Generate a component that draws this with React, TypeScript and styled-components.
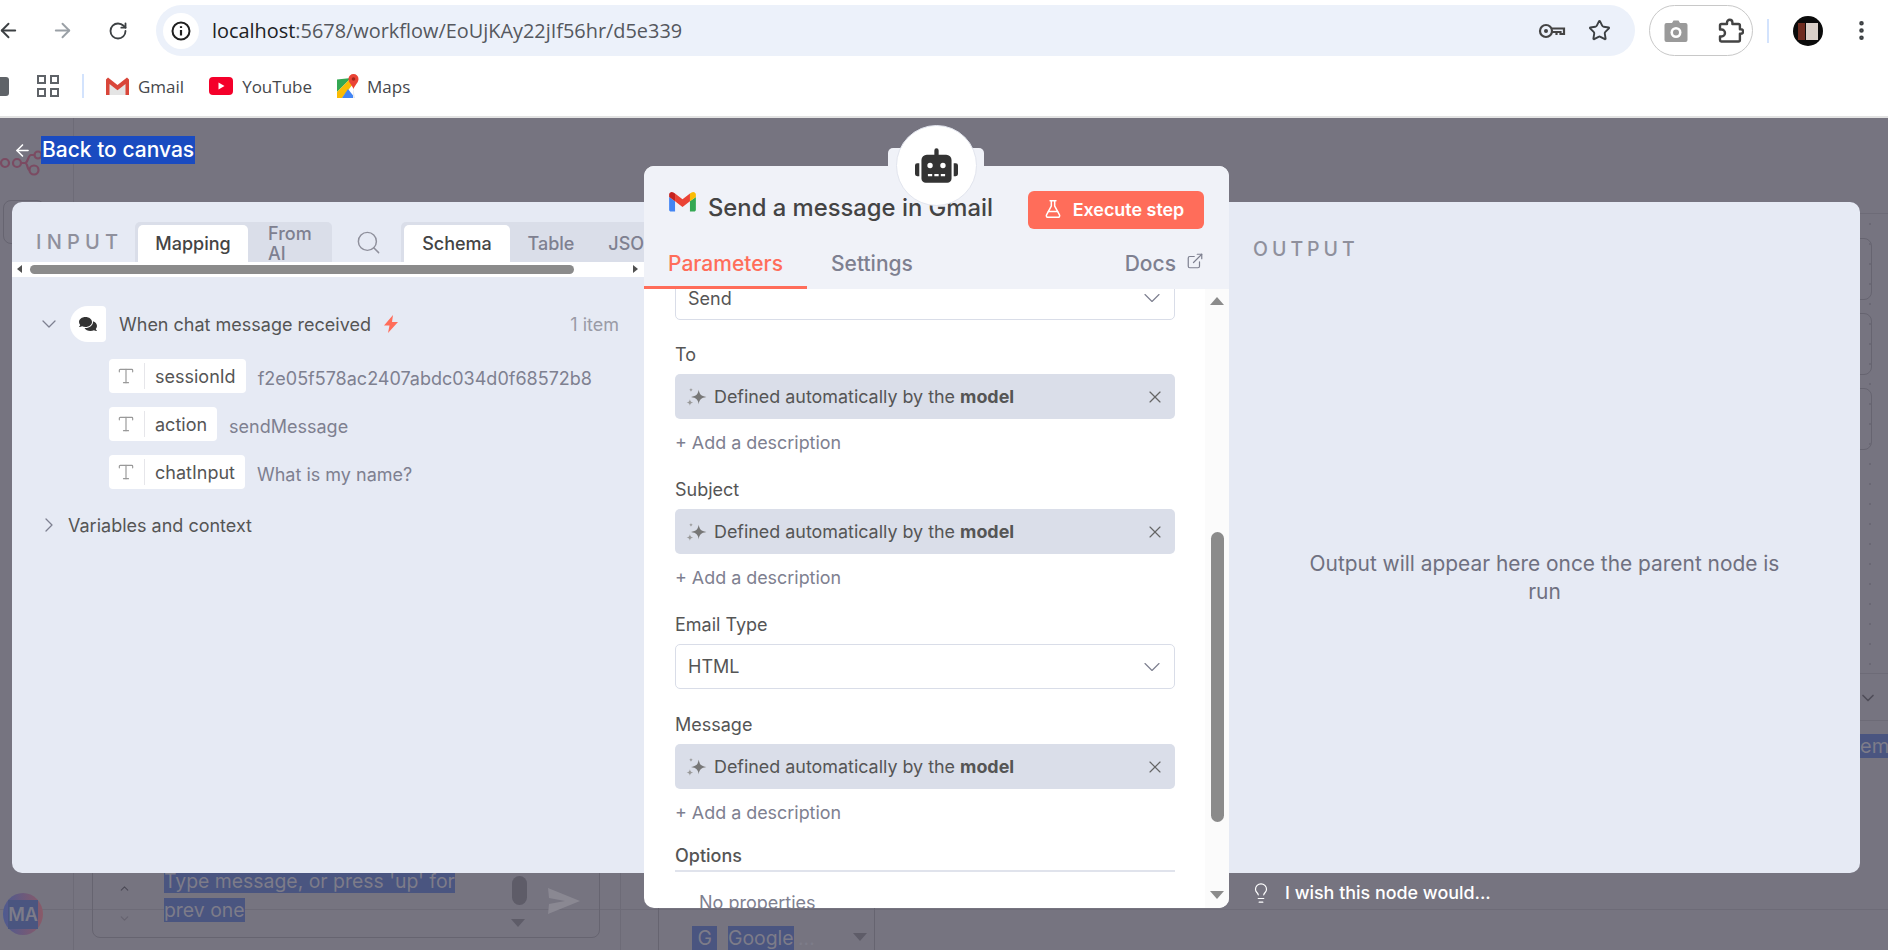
import React from 'react';
import styled, { createGlobalStyle } from 'styled-components';
import { ArrowLeft, ArrowRight, RotateCw, Star, Search, ChevronDown, ChevronRight, ChevronUp, ExternalLink, FlaskConical, X, Lightbulb, Type, EllipsisVertical } from 'lucide-react';
import { FaRobot, FaComments } from 'react-icons/fa';

const GlobalStyle = createGlobalStyle`
  html, body {
    margin: 0;
    padding: 0;
    background: #fff;
    overflow: hidden;
  }
  * { box-sizing: border-box; }
`;

const Frame = styled.div`
  width: 1888px;
  height: 950px;
  display: flex;
  flex-direction: column;
  overflow: hidden;
  font-family: Inter, "Noto Sans", sans-serif;
`;

/* browser chrome */
const BrowserBar = styled.div`
  height: 58px;
  padding: 5px 0 0 0;
  display: flex;
  align-items: flex-start;
  background: #fff;
  flex-shrink: 0;
`;

const NavButton = styled.div<{ $w: number; $color?: string }>`
  width: ${(p) => p.$w}px;
  height: 51px;
  display: flex;
  align-items: center;
  justify-content: flex-end;
  color: ${(p) => p.$color || '#3c4043'};
`;

const UrlBar = styled.div`
  width: 1479px;
  height: 51px;
  margin-left: 28px;
  border-radius: 26px;
  background: #ecf1fa;
  display: flex;
  align-items: center;
  padding: 0 24px 0 7px;
`;

const InfoBadge = styled.div`
  width: 36px;
  height: 36px;
  border-radius: 50%;
  background: #fff;
  display: flex;
  align-items: center;
  justify-content: center;
  flex-shrink: 0;
`;

const UrlText = styled.div`
  margin-left: 13px;
  font-family: "Open Sans", sans-serif;
  font-size: 19.9px;
  color: #55585e;
  flex: 1;
  white-space: nowrap;
  b {
    font-weight: 400;
    color: #202124;
  }
`;

const UrlIcons = styled.div`
  display: flex;
  align-items: center;
  gap: 22px;
  color: #3c4043;
`;

const ExtensionPill = styled.div`
  width: 104px;
  height: 51px;
  margin-left: 14px;
  border: 1.5px solid #c8c8c8;
  border-radius: 26px;
  display: flex;
  align-items: center;
  justify-content: space-between;
  padding: 0 8px 0 14px;
`;

const ToolbarDivider = styled.div`
  width: 2px;
  height: 24px;
  margin: 14px 0 0 14px;
  background: #d3e3fd;
`;

const Avatar = styled.div`
  width: 30px;
  height: 30px;
  margin: 11px 0 0 24px;
  border-radius: 50%;
  background: #0b0b0b;
  display: flex;
  align-items: center;
  justify-content: center;
  gap: 1px;
  &::before {
    content: '';
    width: 7px;
    height: 17px;
    background: #6e2c20;
  }
  &::after {
    content: '';
    width: 12px;
    height: 17px;
    background: #d9cfc8;
  }
`;

const MenuDots = styled.div`
  margin: 13px 0 0 26px;
  color: #3c4043;
`;

const BookmarksBar = styled.div`
  height: 60px;
  padding-bottom: 2px;
  border-bottom: 2px solid #e2e2e2;
  background: #fff;
  display: flex;
  align-items: center;
  flex-shrink: 0;
`;

const BookmarkStub = styled.div`
  width: 9px;
  height: 19px;
  border-radius: 0 3px 3px 0;
  background: #5f6368;
`;

const AppsGrid = styled.div`
  width: 22px;
  height: 22px;
  margin-left: 28px;
  display: grid;
  grid-template-columns: 9px 9px;
  gap: 4px;
  span {
    border: 2px solid #5f6368;
  }
`;

const BookmarkSep = styled.div`
  width: 2px;
  height: 24px;
  margin: 0 22px 0 23px;
  background: #d3e3fd;
`;

const Bookmark = styled.div<{ $gap: number; $after: number }>`
  display: flex;
  align-items: center;
  gap: ${(p) => p.$gap}px;
  margin-right: ${(p) => p.$after}px;
  font-family: "Open Sans", sans-serif;
  font-size: 17px;
  color: #45474b;
`;

/* n8n stage */
const Stage = styled.div`
  position: relative;
  flex: 1;
  background: #767480;
  display: flex;
  flex-direction: column;
  overflow: hidden;
`;

const CanvasLine = styled.div<{ $x?: number; $y?: number; $w?: number; $h?: number }>`
  position: absolute;
  left: ${(p) => p.$x ?? 0}px;
  top: ${(p) => p.$y ?? 0}px;
  width: ${(p) => p.$w ?? 1}px;
  height: ${(p) => p.$h ?? 1}px;
  background: #6d6b77;
`;

const CanvasBox = styled.div<{ $x: number; $y: number; $w: number; $h: number }>`
  position: absolute;
  left: ${(p) => p.$x}px;
  top: ${(p) => p.$y}px;
  width: ${(p) => p.$w}px;
  height: ${(p) => p.$h}px;
  border: 1px solid #666470;
  border-radius: 8px;
`;

const GridDots = styled.div`
  position: absolute;
  left: 1860px;
  top: 96px;
  width: 28px;
  height: 460px;
  background-image: radial-gradient(#6a6874 1px, transparent 1px);
  background-size: 20px 20px;
`;

const CanvasPiece = styled.div<{ $x: number; $y: number }>`
  position: absolute;
  left: ${(p) => p.$x}px;
  top: ${(p) => p.$y}px;
`;

const SelectedDim = styled.span<{ $plain?: boolean; $size?: number }>`
  background: ${(p) => (p.$plain ? 'none' : '#4a5580')};
  color: #7d7c89;
  font-size: ${(p) => p.$size ?? 19.4}px;
  line-height: 29px;
  -webkit-box-decoration-break: clone;
  box-decoration-break: clone;
`;

const UserBadge = styled.div`
  width: 40px;
  height: 42px;
  border-radius: 50%;
  background: linear-gradient(90deg, #4d5a90, #8a5a68);
  display: flex;
  align-items: center;
  justify-content: center;
  font-weight: 600;
`;

const ChatInputText = styled.div`
  width: 310px;
`;

const ScrollPill = styled.div`
  width: 15px;
  height: 29px;
  border-radius: 8px;
  background: #5e5c68;
`;

const DownTriangle = styled.div<{ $color?: string }>`
  width: 0;
  height: 0;
  border-left: 7px solid transparent;
  border-right: 7px solid transparent;
  border-top: 8px solid ${(p) => p.$color || '#5e5c68'};
`;

const UpTriangle = styled.div`
  width: 0;
  height: 0;
  border-left: 7px solid transparent;
  border-right: 7px solid transparent;
  border-bottom: 8px solid #8b8b8b;
`;

const BackRow = styled.div`
  position: relative;
  height: 84px;
  padding: 18px 0 0 13px;
  display: flex;
  align-items: flex-start;
  gap: 9px;
  color: #fff;
`;

const BackArrow = styled.div`
  height: 28px;
  display: flex;
  align-items: center;
`;

const BackLabel = styled.span`
  height: 28px;
  padding: 0 1px;
  background: #1a4bc0;
  color: #fff;
  font-size: 21px;
  font-weight: 500;
  line-height: 28px;
  white-space: nowrap;
`;

const Panel = styled.div`
  position: relative;
  width: 1848px;
  height: 671px;
  margin-left: 12px;
  flex-shrink: 0;
  display: grid;
  grid-template-columns: 633px 584px 631px;
  background: #e6eaf4;
  border-radius: 10px;
`;

const InputPane = styled.div`
  min-width: 0;
  overflow: hidden;
  border-radius: 10px 0 0 10px;
  color: #555;
`;

const PaneHeader = styled.div`
  height: 60px;
  padding: 20px 0 0 24px;
  display: flex;
  align-items: flex-start;
`;

const PaneTitle = styled.div`
  width: 99px;
  height: 40px;
  flex-shrink: 0;
  display: flex;
  align-items: center;
  font-size: 20px;
  font-weight: 500;
  letter-spacing: 5.2px;
  color: #8f909c;
`;

const Segmented = styled.div<{ $ml: number }>`
  height: 40px;
  margin-left: ${(p) => p.$ml}px;
  padding: 3px 3px 0;
  display: flex;
  background: #dadee9;
  border-radius: 5px 5px 0 0;
  flex-shrink: 0;
`;

const Segment = styled.div<{ $active?: boolean; $w: number; $wrap?: boolean }>`
  width: ${(p) => p.$w}px;
  height: 37px;
  display: flex;
  align-items: center;
  justify-content: ${(p) => (p.$wrap ? 'flex-start' : 'center')};
  padding: 0 ${(p) => (p.$wrap ? 22 : 0)}px 0 ${(p) => (p.$wrap ? 20 : 0)}px;
  border-radius: 5px 5px 0 0;
  background: ${(p) => (p.$active ? '#fff' : 'transparent')};
  color: ${(p) => (p.$active ? '#444' : '#7e8090')};
  font-size: 18px;
  font-weight: 500;
  line-height: 20px;
  white-space: ${(p) => (p.$wrap ? 'normal' : 'nowrap')};
`;

const SearchSlot = styled.div`
  width: 21px;
  height: 40px;
  margin-left: 26px;
  display: flex;
  align-items: center;
  justify-content: center;
  color: #8f909c;
  flex-shrink: 0;
`;

const HScroll = styled.div`
  height: 15px;
  padding: 3px 0 0 18px;
  background: #fff;
  position: relative;
  display: flex;
  align-items: flex-start;
`;

const HThumb = styled.div`
  width: 544px;
  height: 9px;
  border-radius: 5px;
  background: #8b8b8b;
`;

const HArrow = styled.div<{ $right?: boolean }>`
  position: absolute;
  top: 3px;
  ${(p) => (p.$right ? 'right: 7px;' : 'left: 5px;')}
  width: 0;
  height: 0;
  border-top: 4.5px solid transparent;
  border-bottom: 4.5px solid transparent;
  ${(p) => (p.$right ? 'border-left: 5px solid #505050;' : 'border-right: 5px solid #505050;')}
`;

const Schema = styled.div`
  padding: 29px 0 0 29px;
`;

const NodeRow = styled.div`
  height: 36px;
  display: flex;
  align-items: center;
`;

const TreeChevron = styled.div`
  width: 16px;
  height: 16px;
  flex-shrink: 0;
  display: flex;
  align-items: center;
  justify-content: center;
  color: #7e8090;
  svg {
    flex-shrink: 0;
  }
`;

const NodeIcon = styled.div`
  width: 36px;
  height: 36px;
  margin-left: 13px;
  background: #fff;
  border-radius: 50% 4px 4px 50%;
  display: flex;
  align-items: center;
  justify-content: center;
  color: #333;
`;

const NodeName = styled.div`
  margin-left: 13px;
  font-size: 18px;
  color: #555;
  white-space: nowrap;
`;

const BoltSlot = styled.div`
  margin-left: 13px;
  display: flex;
`;

const ItemCount = styled.div`
  margin-left: auto;
  margin-right: 26px;
  font-size: 18px;
  color: #9a9ba6;
`;

const FieldList = styled.div`
  padding: 17px 0 0 68px;
  display: flex;
  flex-direction: column;
  gap: 14px;
`;

const FieldRow = styled.div`
  display: flex;
  align-items: center;
  gap: 12px;
`;

const FieldPill = styled.div`
  height: 34px;
  display: flex;
  align-items: center;
  background: #fff;
  border-radius: 4px;
  padding: 0 10px 0 10px;
  font-size: 18px;
  color: #555;
`;

const FieldType = styled.div`
  height: 26px;
  width: 26px;
  margin-right: 10px;
  display: flex;
  align-items: center;
  border-right: 1px solid #e6e6ea;
  color: #999;
  svg {
    margin-left: -3px;
  }
`;

const FieldValue = styled.div`
  padding-top: 4px;
  font-size: 18px;
  color: #7e8090;
  white-space: nowrap;
`;

const ContextRow = styled.div`
  height: 24px;
  margin-top: 24px;
  display: flex;
  align-items: center;
  gap: 11px;
  font-size: 18px;
  color: #555;
`;

const CardSlot = styled.div`
  position: relative;
  min-width: 0;
`;

const Card = styled.div`
  position: absolute;
  left: -1px;
  top: -36px;
  width: 585px;
  height: 742px;
  display: flex;
  flex-direction: column;
  background: #fff;
  border-radius: 10px;
  overflow: hidden;
`;

const RobotTab = styled.div`
  position: absolute;
  left: 243px;
  top: -54px;
  width: 96px;
  height: 30px;
  background: #f0f2f8;
  border-radius: 5px 5px 0 0;
`;

const RobotBubble = styled.div`
  position: absolute;
  left: 251px;
  top: -77px;
  width: 81px;
  height: 81px;
  border-radius: 50%;
  background: #fff;
  border: 1px solid #e2e5ee;
  display: flex;
  align-items: center;
  justify-content: center;
  color: #333;
  z-index: 2;
`;

const CardHead = styled.div`
  height: 123px;
  background: #f0f2f8;
  flex-shrink: 0;
  display: flex;
  flex-direction: column;
`;

const TitleRow = styled.div`
  height: 80px;
  padding: 25px 25px 0 25px;
  display: flex;
  align-items: flex-start;
`;

const CardTitle = styled.div`
  margin-left: 12px;
  height: 32px;
  display: flex;
  align-items: center;
  font-size: 23.8px;
  font-weight: 500;
  color: #444;
  white-space: nowrap;
  flex: 1;
`;

const ExecuteButton = styled.div`
  width: 176px;
  height: 38px;
  padding: 0 5px 2px 0;
  display: flex;
  align-items: center;
  justify-content: center;
  gap: 10px;
  background: #ff6d5a;
  border-radius: 6px;
  color: #fff;
  font-size: 17.9px;
  font-weight: 600;
`;

const TabRow = styled.div`
  flex: 1;
  display: flex;
  align-items: stretch;
`;

const Tab = styled.div<{ $active?: boolean; $w: number }>`
  width: ${(p) => p.$w}px;
  display: flex;
  align-items: center;
  padding: 0 0 5px 24px;
  border-bottom: 3px solid ${(p) => (p.$active ? '#ff6d5a' : 'transparent')};
  font-size: 21px;
  font-weight: 500;
  color: ${(p) => (p.$active ? '#ff6d5a' : '#7e8090')};
`;

const DocsLink = styled.div`
  margin-left: auto;
  margin-right: 25px;
  display: flex;
  align-items: center;
  gap: 10px;
  padding-bottom: 8px;
  font-size: 21px;
  font-weight: 500;
  color: #7e8090;
  svg {
    margin-top: -6px;
  }
`;

const CardBody = styled.div`
  position: relative;
  flex: 1;
  overflow: hidden;
`;

const ParamColumn = styled.div`
  width: 500px;
  margin: -13px 0 0 31px;
  display: flex;
  flex-direction: column;
`;

const SelectBox = styled.div<{ $h: number; $flatTop?: boolean }>`
  height: ${(p) => p.$h}px;
  padding: 0 8px 0 12px;
  display: flex;
  align-items: center;
  justify-content: space-between;
  background: #fff;
  border: 1px solid #d9dde8;
  border-radius: ${(p) => (p.$flatTop ? '0 0 5px 5px' : '5px')};
  font-size: 18px;
  color: #555;
  svg {
    color: #7e8090;
  }
`;

const FieldLabel = styled.div<{ $mt: number; $strong?: boolean }>`
  height: 24px;
  margin-top: ${(p) => p.$mt}px;
  margin-bottom: 8px;
  display: flex;
  align-items: center;
  font-size: 18px;
  font-weight: ${(p) => (p.$strong ? 500 : 400)};
  color: #555;
`;

const ModelChip = styled.div`
  height: 45px;
  padding: 0 10px 0 11px;
  display: flex;
  align-items: center;
  background: #dadee9;
  border-radius: 5px;
  font-size: 17.9px;
  color: #555;
  b {
    font-weight: 700;
    margin-left: 5px;
  }
  svg:last-child {
    margin-left: auto;
    color: #666;
  }
`;

const ChipIcon = styled.svg`
  margin-right: 7px;
  flex-shrink: 0;
`;

const AddDescription = styled.div`
  height: 24px;
  margin-top: 11px;
  margin-bottom: 1px;
  display: flex;
  align-items: center;
  font-size: 17.9px;
  color: #7e8090;
`;

const OptionsRule = styled.div`
  height: 2px;
  margin-top: -5px;
  background: #e0e3ec;
`;

const NoProps = styled.div`
  margin: 20px 0 0 24px;
  font-size: 18px;
  color: #7e8090;
`;

const VScroll = styled.div`
  position: absolute;
  right: 0;
  top: 0;
  bottom: 0;
  width: 24px;
  background: #fbfbfb;
  display: flex;
  flex-direction: column;
  align-items: center;
  padding: 8px 0 9px;
`;

const VThumb = styled.div`
  width: 13px;
  height: 290px;
  margin-top: 227px;
  margin-bottom: auto;
  border-radius: 7px;
  background: #8b8b8b;
`;

const OutputPane = styled.div`
  display: flex;
  flex-direction: column;
  padding: 35px 24px 0 24px;
`;

const OutputTitle = styled.div`
  font-size: 19.5px;
  font-weight: 500;
  letter-spacing: 4px;
  line-height: 24px;
  color: #8f909c;
`;

const OutputHint = styled.div`
  width: 490px;
  margin: 289px auto 0;
  text-align: center;
  font-size: 20.9px;
  line-height: 28px;
  color: #6f7080;
`;

const WishRow = styled.div`
  position: relative;
  height: 35px;
  padding: 4px 0 0 1250px;
  display: flex;
  align-items: center;
  gap: 13px;
  font-size: 17.9px;
  font-weight: 500;
  color: #fff;
`;

/* drawn marks */
const GmailColor = ({ size }: { size: number }) => (
  <svg width={size} height={size * 0.8} viewBox="0 0 52 42">
    <path fill="#4285f4" d="M3.5 40h8V20L0 11.5V36.500c0 1.900 1.600 3.500 3.500 3.500z" />
    <path fill="#34a853" d="M40.500 40h8c1.900 0 3.500-1.600 3.500-3.500V11.500L40.500 20z" />
    <path fill="#fbbc04" d="M40.500 5v15L52 11.500V7c0-4.300-4.900-6.800-8.400-4.200z" />
    <path fill="#ea4335" d="M11.500 20V5L26 15.900 40.500 5v15L26 30.900z" />
    <path fill="#c5221f" d="M0 7v4.500L11.500 20V5L8.400 2.800C4.900.2 0 2.700 0 7z" />
  </svg>
);

const GmailFlat = () => (
  <svg width="23" height="18" viewBox="0 0 23 18">
    <path fill="#e4e4e4" d="M3 3h17v15H3z" />
    <path fill="#fff" d="M4 3h15l-7.500 6z" />
    <path fill="#d9463a" d="M0 2.500 2 .5l9.500 7.500L21 .5l2 2V18h-3.500V7l-8 6.300L3.500 7v11H0z" />
  </svg>
);

const YoutubeMark = () => (
  <svg width="24" height="18" viewBox="0 0 24 18">
    <rect width="24" height="18" rx="4" fill="#f4002a" />
    <path fill="#fff" d="m9.500 5.500 6 3.500-6 3.500z" />
  </svg>
);

const MapsMark = () => (
  <svg width="22" height="24" viewBox="0 0 22 24">
    <path fill="#34a853" d="M0 5.500 14 4 0 18z" />
    <path fill="#fbbc04" d="M14 4h2v6L5 24H0v-6z" />
    <path fill="#4285f4" d="M5 24 11 15l7 9z" />
    <path fill="#e8eaed" d="M16 13v11h2z" />
    <path fill="#ea4335" d="M16.500 0a5 5 0 0 1 5 5c0 3.500-3.500 6-5 10-1.500-4-5-6.500-5-10a5 5 0 0 1 5-5z" />
    <circle cx="16.500" cy="5" r="1.800" fill="#a3261c" />
  </svg>
);

const InfoMark = () => (
  <svg width="20" height="20" viewBox="0 0 20 20" fill="none" stroke="#1f1f1f" strokeWidth="2">
    <circle cx="10" cy="10" r="8.500" />
    <path d="M10 9v5.500" strokeWidth="2.200" />
    <path d="M10 5.200v1.800" strokeWidth="2.200" />
  </svg>
);

const KeyMark = () => (
  <svg width="28" height="16" viewBox="0 0 28 16" fill="none" stroke="#444" strokeWidth="2.200">
    <circle cx="8" cy="8" r="6" />
    <circle cx="8" cy="8" r="2" fill="#444" stroke="none" />
    <path d="M14 5.500h12v5.500h-3.500v-2H14" />
    <path d="M18.500 9v3" />
  </svg>
);

const CameraMark = () => (
  <svg width="24" height="22" viewBox="0 0 24 22">
    <path fill="#9a9a9a" d="M8 3 9.500 0.500h5L16 3h5.500a2 2 0 0 1 2 2v15a2 2 0 0 1-2 2h-19a2 2 0 0 1-2-2V5a2 2 0 0 1 2-2z" />
    <circle cx="12" cy="12.500" r="5.500" fill="#fff" />
    <circle cx="12" cy="12.500" r="3" fill="#9a9a9a" />
  </svg>
);

const PuzzleMark = () => (
  <svg width="28" height="28" viewBox="0 0 28 28" fill="none" stroke="#444" strokeWidth="2.400" strokeLinejoin="round">
    <path d="M4 8.500a1.500 1.500 0 0 1 1.500-1.500H11V5.500a2.700 2.700 0 0 1 5.400 0V7h6a1.500 1.500 0 0 1 1.500 1.500v3.800h1a2.200 2.200 0 0 1 0 4.400h-1V23a1.500 1.500 0 0 1-1.500 1.500h-17A1.500 1.500 0 0 1 4 23v-3.500h1.500a3.500 3.500 0 0 0 0-7H4z" />
  </svg>
);

const SendMark = () => (
  <svg width="32" height="26" viewBox="0 0 32 26">
    <path fill="#8a8892" d="M0 0 32 13 0 26l1-10 16-3L1 10z" />
  </svg>
);

const WorkflowMark = () => (
  <svg width="44" height="30" viewBox="0 0 44 30" fill="none" stroke="#7b4b62" strokeWidth="2.200">
    <circle cx="5" cy="13" r="4" />
    <circle cx="17" cy="13" r="4" />
    <circle cx="34" cy="20" r="4.500" />
    <circle cx="38" cy="5" r="3.500" />
    <path d="M21 13h4c3 0 3-8 6-8h3.500M25 13c3 0 2 7 4.500 7" />
  </svg>
);

const BoltMark = () => (
  <svg width="14" height="18" viewBox="0 0 14 18">
    <path fill="#ff6d5a" d="M9 0 0 10.500h5.500L4 18l10-11H8z" />
  </svg>
);

const SparkleMark = () => (
  <ChipIcon width="21" height="22" viewBox="0 0 19 20">
    <path fill="#777" d="M11.500 3.500c.7 4 2 5.700 7 6.500-5 .8-6.300 2.500-7 6.500-.7-4-2-5.700-7-6.500 5-.8 6.300-2.500 7-6.500z" />
    <path fill="#999" d="M3.500 12c.3 1.800 1 2.700 3 3-2 .3-2.700 1.200-3 3-.3-1.800-1-2.700-3-3 2-.3 2.700-1.200 3-3z" />
    <path fill="#999" d="M4.500 1.500c.2 1.300.7 1.800 2 2-1.300.2-1.800.7-2 2-.2-1.300-.7-1.800-2-2 1.300-.2 1.800-.7 2-2z" />
  </ChipIcon>
);

const fields = [
  { name: 'sessionId', value: 'f2e05f578ac2407abdc034d0f68572b8' },
  { name: 'action', value: 'sendMessage' },
  { name: 'chatInput', value: 'What is my name?' },
];

const AutoField = ({ label, mt }: { label: string; mt: number }) => (
  <>
    <FieldLabel $mt={mt}>{label}</FieldLabel>
    <ModelChip>
      <SparkleMark />
      Defined automatically by the <b>model</b>
      <X size={20} strokeWidth={1.4} />
    </ModelChip>
    <AddDescription>+ Add a description</AddDescription>
  </>
);

export default function App() {
  return (
    <Frame>
      <GlobalStyle />
      <BrowserBar>
        <NavButton $w={20}><ArrowLeft size={23} strokeWidth={2} style={{ marginLeft: -6 }} /></NavButton>
        <NavButton $w={54} $color="#9aa0a6"><ArrowRight size={23} strokeWidth={2} /></NavButton>
        <NavButton $w={54}><RotateCw size={20} strokeWidth={2.2} /></NavButton>
        <UrlBar>
          <InfoBadge><InfoMark /></InfoBadge>
          <UrlText><b>localhost</b>:5678/workflow/EoUjKAy22jIf56hr/d5e339</UrlText>
          <UrlIcons>
            <KeyMark />
            <Star size={23} strokeWidth={2} />
          </UrlIcons>
        </UrlBar>
        <ExtensionPill>
          <CameraMark />
          <PuzzleMark />
        </ExtensionPill>
        <ToolbarDivider />
        <Avatar />
        <MenuDots><EllipsisVertical size={25} strokeWidth={2.4} /></MenuDots>
      </BrowserBar>
      <BookmarksBar>
        <BookmarkStub />
        <AppsGrid><span /><span /><span /><span /></AppsGrid>
        <BookmarkSep />
        <Bookmark $gap={9} $after={25}><GmailFlat />Gmail</Bookmark>
        <Bookmark $gap={9} $after={25}><YoutubeMark />YouTube</Bookmark>
        <Bookmark $gap={8} $after={0}><MapsMark />Maps</Bookmark>
      </BookmarksBar>
      <Stage>
        <CanvasLine $x={73} $h={84} />
        <CanvasLine $x={73} $y={755} $h={77} />
        <CanvasLine $x={620} $y={755} $h={77} />
        <CanvasLine $y={791} $w={1888} />
        <CanvasLine $x={1860} $y={95} $w={28} />
        <CanvasLine $x={1860} $y={555} $w={28} />
        <CanvasLine $x={1860} $y={602} $w={28} />
        <CanvasBox $x={3} $y={82} $w={42} $h={44} />
        <CanvasBox $x={1800} $y={120} $w={72} $h={62} />
        <CanvasBox $x={1800} $y={195} $w={72} $h={62} />
        <CanvasBox $x={1800} $y={270} $w={72} $h={62} />
        <GridDots />
        <CanvasPiece $x={0} $y={32}><WorkflowMark /></CanvasPiece>
        <CanvasBox $x={92} $y={700} $w={508} $h={120} />
        <CanvasBox $x={658} $y={760} $w={217} $h={120} />
        <CanvasPiece $x={3} $y={775}><UserBadge><SelectedDim $size={18}>MA</SelectedDim></UserBadge></CanvasPiece>
        <CanvasPiece $x={118} $y={761}><ChevronUp size={13} color="#4c4a56" /></CanvasPiece>
        <CanvasPiece $x={118} $y={791}><ChevronDown size={13} color="#65636f" /></CanvasPiece>
        <CanvasPiece $x={164} $y={749}>
          <ChatInputText><SelectedDim>Type message, or press 'up' for prev one</SelectedDim></ChatInputText>
        </CanvasPiece>
        <CanvasPiece $x={512} $y={758}><ScrollPill /></CanvasPiece>
        <CanvasPiece $x={511} $y={801}><DownTriangle /></CanvasPiece>
        <CanvasPiece $x={548} $y={770}><SendMark /></CanvasPiece>
        <CanvasPiece $x={692} $y={806}><SelectedDim>&nbsp;G&nbsp;</SelectedDim></CanvasPiece>
        <CanvasPiece $x={728} $y={806}><SelectedDim>Google</SelectedDim></CanvasPiece>
        <CanvasPiece $x={798} $y={806}><SelectedDim $plain>...</SelectedDim></CanvasPiece>
        <CanvasPiece $x={853} $y={815}><DownTriangle /></CanvasPiece>
        <CanvasPiece $x={1858} $y={570}><ChevronDown size={20} color="#4f4d58" /></CanvasPiece>
        <CanvasPiece $x={1860} $y={614}><SelectedDim $size={20}>em</SelectedDim></CanvasPiece>

        <BackRow>
          <BackArrow><ArrowLeft size={19} strokeWidth={2} /></BackArrow>
          <BackLabel>Back to canvas</BackLabel>
        </BackRow>
        <Panel>
          <InputPane>
            <PaneHeader>
              <PaneTitle>INPUT</PaneTitle>
              <Segmented $ml={0}>
                <Segment $active $w={110}>Mapping</Segment>
                <Segment $w={81} $wrap>From AI</Segment>
              </Segmented>
              <SearchSlot><Search size={27} strokeWidth={1.3} style={{ flexShrink: 0 }} /></SearchSlot>
              <Segmented $ml={22}>
                <Segment $active $w={106}>Schema</Segment>
                <Segment $w={82}>Table</Segment>
                <Segment $w={82}>JSON</Segment>
              </Segmented>
            </PaneHeader>
            <HScroll>
              <HArrow />
              <HThumb />
              <HArrow $right />
            </HScroll>
            <Schema>
              <NodeRow>
                <TreeChevron><ChevronDown size={24} strokeWidth={1.3} /></TreeChevron>
                <NodeIcon><FaComments size={18} /></NodeIcon>
                <NodeName>When chat message received</NodeName>
                <BoltSlot><BoltMark /></BoltSlot>
                <ItemCount>1 item</ItemCount>
              </NodeRow>
              <FieldList>
                {fields.map((f) => (
                  <FieldRow key={f.name}>
                    <FieldPill>
                      <FieldType><Type size={20} strokeWidth={1.4} /></FieldType>
                      {f.name}
                    </FieldPill>
                    <FieldValue>{f.value}</FieldValue>
                  </FieldRow>
                ))}
              </FieldList>
              <ContextRow>
                <TreeChevron><ChevronRight size={24} strokeWidth={1.3} /></TreeChevron>
                Variables and context
              </ContextRow>
            </Schema>
          </InputPane>
          <CardSlot>
            <RobotTab />
            <RobotBubble><FaRobot size={43} /></RobotBubble>
            <Card>
              <CardHead>
                <TitleRow>
                  <GmailColor size={27} />
                  <CardTitle>Send a message in Gmail</CardTitle>
                  <ExecuteButton><FlaskConical size={20} strokeWidth={1.8} />Execute step</ExecuteButton>
                </TitleRow>
                <TabRow>
                  <Tab $active $w={163}>Parameters</Tab>
                  <Tab $w={130}>Settings</Tab>
                  <DocsLink>Docs <ExternalLink size={18} strokeWidth={1.6} /></DocsLink>
                </TabRow>
              </CardHead>
              <CardBody>
                <ParamColumn>
                  <SelectBox $h={44} $flatTop>
                    Send
                    <ChevronDown size={28} strokeWidth={1} />
                  </SelectBox>
                  <AutoField label="To" mt={22} />
                  <AutoField label="Subject" mt={22} />
                  <FieldLabel $mt={22}>Email Type</FieldLabel>
                  <SelectBox $h={45}>
                    HTML
                    <ChevronDown size={28} strokeWidth={1} />
                  </SelectBox>
                  <AutoField label="Message" mt={23} />
                  <FieldLabel $mt={18} $strong>Options</FieldLabel>
                  <OptionsRule />
                  <NoProps>No properties</NoProps>
                </ParamColumn>
                <VScroll>
                  <UpTriangle />
                  <VThumb />
                  <DownTriangle $color="#8b8b8b" />
                </VScroll>
              </CardBody>
            </Card>
          </CardSlot>
          <OutputPane>
            <OutputTitle>OUTPUT</OutputTitle>
            <OutputHint>Output will appear here once the parent node is run</OutputHint>
          </OutputPane>
        </Panel>
        <WishRow>
          <Lightbulb size={22} strokeWidth={1.3} />
          I wish this node would...
        </WishRow>
      </Stage>
    </Frame>
  );
}
